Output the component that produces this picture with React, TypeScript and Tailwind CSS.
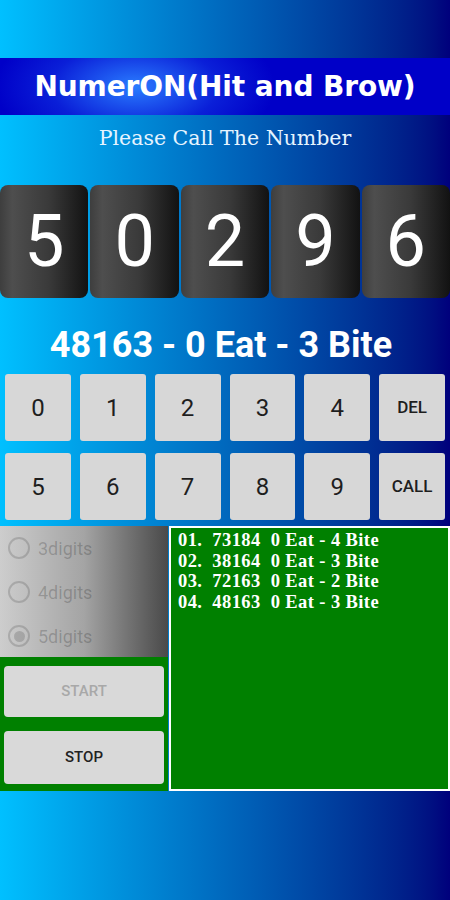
import React from 'react';

const digits = ['5', '0', '2', '9', '6'];
const keys = ['0', '1', '2', '3', '4', 'DEL', '5', '6', '7', '8', '9', 'CALL'];
const history = [
  { no: '01.', guess: '73184', eat: 0, bite: 4 },
  { no: '02.', guess: '38164', eat: 0, bite: 3 },
  { no: '03.', guess: '72163', eat: 0, bite: 2 },
  { no: '04.', guess: '48163', eat: 0, bite: 3 },
];
const modes = [
  { label: '3digits', checked: false },
  { label: '4digits', checked: false },
  { label: '5digits', checked: true },
];

const App: React.FC = () => {
  return (
    <div className="w-[450px] h-[900px] overflow-hidden bg-linear-to-r from-[#00c0ff] to-[#00007c] font-['Roboto',sans-serif]">
      {/* top spacer */}
      <div className="h-[58px]" />

      {/* Title bar */}
      <div className="h-[57px] flex items-center justify-center bg-[radial-gradient(ellipse_140px_70px_at_135px_50%,#2a7cff_0%,#0a1fd8_60%,#0000c8_100%)]">
        <h1 className="text-white text-[28px] font-bold font-['DejaVu_Sans',sans-serif] tracking-[-0.1px]">
          NumerON(Hit and Brow)
        </h1>
      </div>

      {/* Subtitle */}
      <div className="h-[70px] pt-[10px] text-center">
        <p className="text-[#e6f4ff] text-[20.5px] leading-[26px] font-['DejaVu_Serif',serif]">
          Please Call The Number
        </p>
      </div>

      {/* Digit tiles */}
      <div className="h-[113px] flex gap-[2px]">
        {digits.map((d, i) => (
          <div
            key={i}
            className="flex-1 rounded-[8px] bg-[linear-gradient(to_right,#3e3e3e_0%,#4e4e4e_14%,#3a3a3a_55%,#121212_100%)] flex items-center justify-center"
          >
            <span className="text-white text-[72px] leading-none">{d}</span>
          </div>
        ))}
      </div>

      {/* Result */}
      <div className="h-[76px] pt-[27px] pr-[8px] text-center">
        <p className="text-white text-[36px] leading-[40px] font-bold">48163 - 0 Eat - 3 Bite</p>
      </div>

      {/* Keypad */}
      <div className="px-[5px] grid grid-cols-6 gap-x-[9px] gap-y-[12px]">
        {keys.map((k) => (
          <button
            key={k}
            className={`h-[67px] rounded-[3px] bg-[#d7d7d7] text-[#1e1e1e] flex items-center justify-center ${
              k.length > 1 ? 'text-[17px] font-medium' : 'text-[24px]'
            }`}
          >
            {k}
          </button>
        ))}
      </div>

      {/* Bottom section */}
      <div className="mt-[6px] h-[265px] flex">
        <div className="w-[168px] flex flex-col">
          <div className="h-[131px] bg-linear-to-r from-[#cdcdcd] via-[#a4a4a4] to-[#4a4a4a] pl-[8px] pt-[10px] flex flex-col gap-[20px]">
            {modes.map((m) => (
              <div key={m.label} className="flex items-center gap-[8px] h-[24px]">
                <span className="w-[22px] h-[22px] rounded-full border-2 border-black/15 flex items-center justify-center">
                  {m.checked && <span className="w-[11px] h-[11px] rounded-full bg-black/15" />}
                </span>
                <span className="text-[18px] text-black/20">{m.label}</span>
              </div>
            ))}
          </div>
          <div className="flex-1 bg-[#008000] px-[4px] pt-[9px] flex flex-col gap-[14px]">
            <button className="h-[51px] rounded-[4px] bg-[#d9d9d9] text-[#a8a8a8] text-[15px] font-medium">
              START
            </button>
            <button className="h-[53px] rounded-[4px] bg-[#d9d9d9] text-[#222] text-[15px] font-medium">
              STOP
            </button>
          </div>
        </div>

        <div className="flex-1 ml-[1px] border-2 border-white bg-[#008000] px-[7px] pt-[2px]">
          {history.map((h) => (
            <div
              key={h.no}
              className="text-white text-[18.5px] leading-[20.5px] tracking-[0.4px] font-bold font-['Liberation_Serif',serif] whitespace-pre"
            >
              {`${h.no}  ${h.guess}  ${h.eat} Eat - ${h.bite} Bite`}
            </div>
          ))}
        </div>
      </div>
    </div>
  );
};

export default App;
